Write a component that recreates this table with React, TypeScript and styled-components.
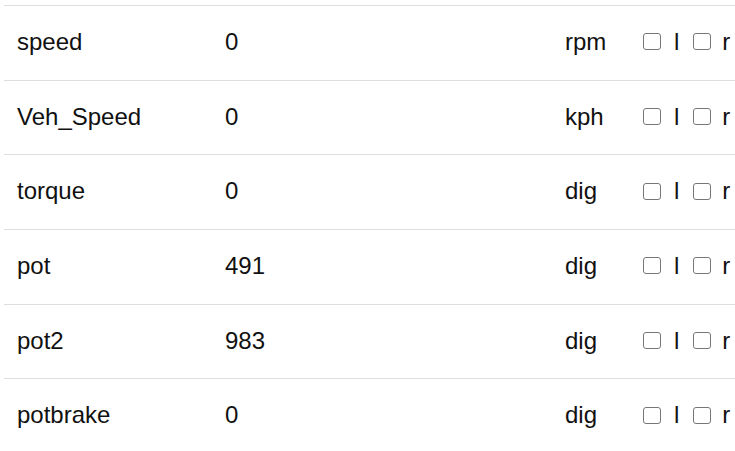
import * as React from 'react';
import styled, { createGlobalStyle } from 'styled-components';

const GlobalStyle = createGlobalStyle`
  html, body {
    margin: 0;
    padding: 0;
    background: #fff;
    overflow: hidden;
  }
  body {
    font-family: "Liberation Sans", Arial, sans-serif;
    color: #111;
  }
`;

const Table = styled.div`
  margin: 5px 0 0 4px;
  width: 780px;
  border-bottom: 1.5px solid #dedede;
`;

const Row = styled.div`
  display: grid;
  grid-template-columns: 208px 340px 78px auto;
  align-items: center;
  height: 74.7px;
  box-sizing: border-box;
  padding: 0 0 2px 13px;
  border-top: 1.5px solid #dedede;
  font-size: 24px;
`;

const Cell = styled.span`
  white-space: nowrap;
`;

const Controls = styled.div`
  display: flex;
  align-items: center;
`;

const Box = styled.input<{ $gap: number }>`
  -webkit-appearance: none;
  appearance: none;
  display: block;
  flex: none;
  width: 18px;
  height: 17px;
  margin: 0 ${(p) => p.$gap}px 0 0;
  padding: 0;
  box-sizing: border-box;
  border: 1.6px solid #777;
  border-radius: 3px;
  background: #fff;
`;

const Letter = styled.span<{ $gap?: number }>`
  font-size: 24px;
  margin-right: ${(p) => p.$gap ?? 0}px;
  line-height: 1;
`;

type Signal = { name: string; value: string; unit: string };

const signals: Signal[] = [
  { name: 'speed', value: '0', unit: 'rpm' },
  { name: 'Veh_Speed', value: '0', unit: 'kph' },
  { name: 'torque', value: '0', unit: 'dig' },
  { name: 'pot', value: '491', unit: 'dig' },
  { name: 'pot2', value: '983', unit: 'dig' },
  { name: 'potbrake', value: '0', unit: 'dig' },
];

export default function App() {
  return (
    <>
      <GlobalStyle />
      <Table>
        {signals.map((s) => (
          <Row key={s.name}>
            <Cell>{s.name}</Cell>
            <Cell>{s.value}</Cell>
            <Cell>{s.unit}</Cell>
            <Controls>
              <Box type="checkbox" $gap={13} />
              <Letter $gap={14}>l</Letter>
              <Box type="checkbox" $gap={11} />
              <Letter>r</Letter>
            </Controls>
          </Row>
        ))}
      </Table>
    </>
  );
}
